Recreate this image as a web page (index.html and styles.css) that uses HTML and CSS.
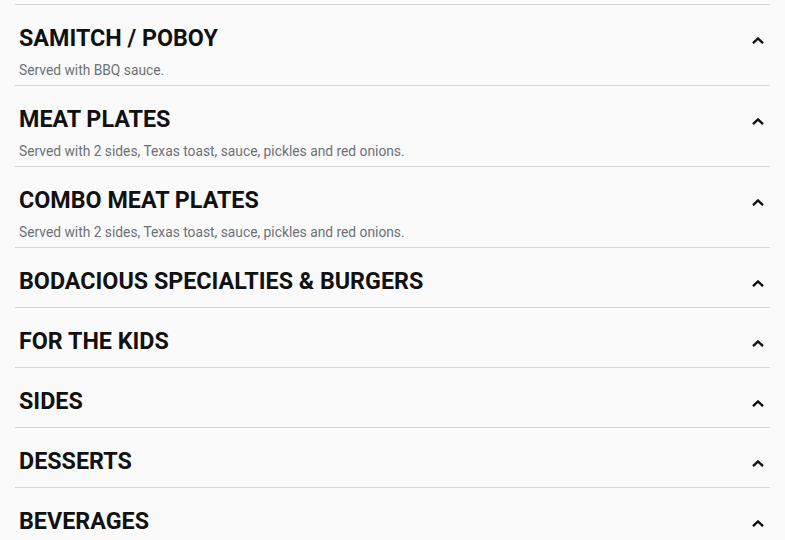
FILE: index.html
```html
<!DOCTYPE html>
<html lang="en">
<head>
<meta charset="utf-8">
<title>Menu</title>
<link rel="stylesheet" href="styles.css">
</head>
<body>
<div class="page">
  <div class="menu">
    <div class="divider"></div>
    <section class="cat">
      <div class="cat-head">
        <h3 class="cat-title">SAMITCH / POBOY</h3>
        <svg class="chev" viewBox="0 0 12 7" width="12" height="7"><path d="M1 6.2 L6 1.5 L11 6.2"/></svg>
      </div>
      <p class="cat-desc">Served with BBQ sauce.</p>
    </section>
    <section class="cat">
      <div class="cat-head">
        <h3 class="cat-title">MEAT PLATES</h3>
        <svg class="chev" viewBox="0 0 12 7" width="12" height="7"><path d="M1 6.2 L6 1.5 L11 6.2"/></svg>
      </div>
      <p class="cat-desc">Served with 2 sides, Texas toast, sauce, pickles and red onions.</p>
    </section>
    <section class="cat">
      <div class="cat-head">
        <h3 class="cat-title">COMBO MEAT PLATES</h3>
        <svg class="chev" viewBox="0 0 12 7" width="12" height="7"><path d="M1 6.2 L6 1.5 L11 6.2"/></svg>
      </div>
      <p class="cat-desc">Served with 2 sides, Texas toast, sauce, pickles and red onions.</p>
    </section>
    <section class="cat">
      <div class="cat-head">
        <h3 class="cat-title">BODACIOUS SPECIALTIES &amp; BURGERS</h3>
        <svg class="chev" viewBox="0 0 12 7" width="12" height="7"><path d="M1 6.2 L6 1.5 L11 6.2"/></svg>
      </div>
    </section>
    <section class="cat">
      <div class="cat-head">
        <h3 class="cat-title">FOR THE KIDS</h3>
        <svg class="chev" viewBox="0 0 12 7" width="12" height="7"><path d="M1 6.2 L6 1.5 L11 6.2"/></svg>
      </div>
    </section>
    <section class="cat">
      <div class="cat-head">
        <h3 class="cat-title">SIDES</h3>
        <svg class="chev" viewBox="0 0 12 7" width="12" height="7"><path d="M1 6.2 L6 1.5 L11 6.2"/></svg>
      </div>
    </section>
    <section class="cat">
      <div class="cat-head">
        <h3 class="cat-title">DESSERTS</h3>
        <svg class="chev" viewBox="0 0 12 7" width="12" height="7"><path d="M1 6.2 L6 1.5 L11 6.2"/></svg>
      </div>
    </section>
    <section class="cat">
      <div class="cat-head">
        <h3 class="cat-title">BEVERAGES</h3>
        <svg class="chev" viewBox="0 0 12 7" width="12" height="7"><path d="M1 6.2 L6 1.5 L11 6.2"/></svg>
      </div>
    </section>
  </div>
</div>
</body>
</html>
```

FILE: styles.css
```css
html, body {
  margin: 0;
  padding: 0;
  background: #f2f2f2;
  height: 540px;
  overflow: hidden;
}
.page {
  width: 785px;
  height: 540px;
  background: #fafafa;
  font-family: Roboto, "Liberation Sans", sans-serif;
}
.menu {
  padding: 4px 15px 0;
}
.divider {
  border-bottom: 1px solid #d6d6d6;
}
.cat {
  border-bottom: 1px solid #d6d6d6;
  padding: 19px 4px 4px;
}
.cat-head {
  display: flex;
  align-items: flex-start;
  justify-content: space-between;
  margin-bottom: 8px;
}
.cat-title {
  margin: 0;
  font-size: 23.3px;
  line-height: 28px;
  font-weight: 700;
  color: #111;
}
.chev {
  display: block;
  fill: none;
  stroke: #111;
  stroke-width: 2.4;
  margin-top: 13px;
  margin-right: 2px;
}
.cat-desc {
  margin: 0;
  font-size: 13.8px;
  line-height: 21px;
  color: #6c7178;
}
```
